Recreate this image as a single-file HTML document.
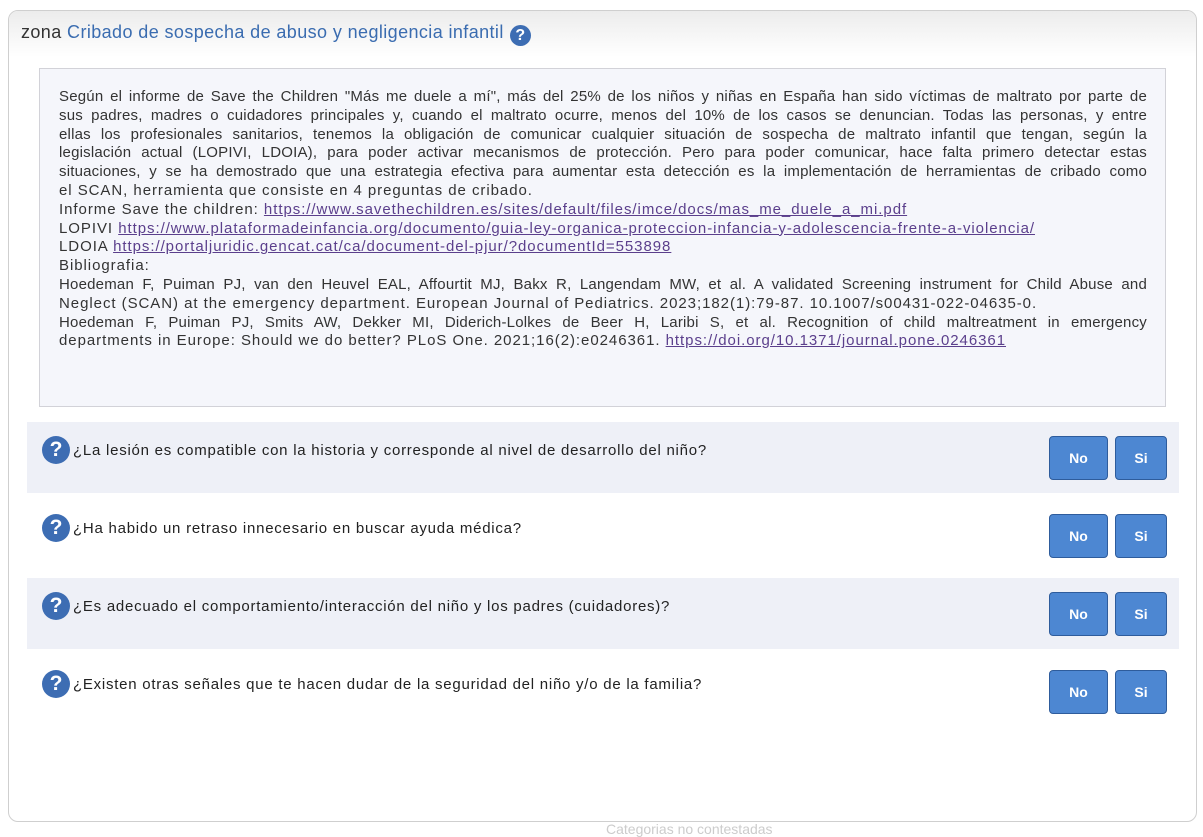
<!DOCTYPE html>
<html><head><meta charset="utf-8"><style>
*{box-sizing:border-box;margin:0;padding:0}
body{width:1203px;height:834px;background:#fff;font-family:"Liberation Sans",Arial,sans-serif;position:relative;overflow:hidden}
.modal{position:absolute;left:8px;top:10px;width:1189px;height:812px;border:1px solid #cfcfcf;border-radius:10px;background:#fff;overflow:hidden}
.hdr{height:46px;background:linear-gradient(#ececec,#fff);padding:11px 0 0 12px;font-size:18px;letter-spacing:0.4px;color:#333;white-space:nowrap}
.hdr b{font-weight:normal;color:#3a6cb0}
.qi{display:inline-block;width:21px;height:21px;border-radius:50%;background:#3d6db3;color:#fff;font-weight:bold;font-size:16px;text-align:center;line-height:21px;vertical-align:-2px;margin-left:6px;letter-spacing:0}
.box{position:absolute;left:30px;top:57px;width:1127px;height:339px;border:1px solid #d2d2d8;background:#f5f6fb;padding:19px 18px 0 19px;font-size:15px;letter-spacing:0.95px;color:#333;line-height:18.8px}
.box div{white-space:nowrap}
.box .j{text-align:justify;text-align-last:justify;white-space:normal;letter-spacing:0.2px}
a{color:#5b3f8c;text-decoration:underline}
.row{position:absolute;left:18px;width:1152px;height:71px}
.row.g{background:#eef0f7}
.q{position:absolute;left:15px;top:14px;font-size:15px;letter-spacing:0.75px;color:#222;display:flex;align-items:center;white-space:nowrap}
.ic{width:28px;height:28px;border-radius:50%;background:#3d6db3;color:#fff;font-weight:bold;font-size:21px;text-align:center;line-height:28px;margin-right:3px;letter-spacing:0}
.btn{position:absolute;top:14px;height:44px;background:#4d87d2;border:1px solid #2e5c9c;border-radius:4px;color:#fff;font-weight:bold;font-size:14px;text-align:center;line-height:42px}
.no{left:1022px;width:59px}.si{left:1088px;width:52px}
</style></head><body>
<div class="modal">
<div class="hdr">zona <b>Cribado de sospecha de abuso y negligencia infantil</b><span class="qi">?</span></div>
<div class="box">
<div class="j">Según el informe de Save the Children "Más me duele a mí", más del 25% de los niños y niñas en España han sido víctimas de maltrato por parte de</div>
<div class="j">sus padres, madres o cuidadores principales y, cuando el maltrato ocurre, menos del 10% de los casos se denuncian. Todas las personas, y entre</div>
<div class="j">ellas los profesionales sanitarios, tenemos la obligación de comunicar cualquier situación de sospecha de maltrato infantil que tengan, según la</div>
<div class="j">legislación actual (LOPIVI, LDOIA), para poder activar mecanismos de protección. Pero para poder comunicar, hace falta primero detectar estas</div>
<div class="j">situaciones, y se ha demostrado que una estrategia efectiva para aumentar esta detección es la implementación de herramientas de cribado como</div>
<div>el SCAN, herramienta que consiste en 4 preguntas de cribado.</div>
<div>Informe Save the children: <a>https://www.savethechildren.es/sites/default/files/imce/docs/mas_me_duele_a_mi.pdf</a></div>
<div>LOPIVI <a>https://www.plataformadeinfancia.org/documento/guia-ley-organica-proteccion-infancia-y-adolescencia-frente-a-violencia/</a></div>
<div>LDOIA <a>https://portaljuridic.gencat.cat/ca/document-del-pjur/?documentId=553898</a></div>
<div>Bibliografia:</div>
<div class="j">Hoedeman F, Puiman PJ, van den Heuvel EAL, Affourtit MJ, Bakx R, Langendam MW, et al. A validated Screening instrument for Child Abuse and</div>
<div>Neglect (SCAN) at the emergency department. European Journal of Pediatrics. 2023;182(1):79-87. 10.1007/s00431-022-04635-0.</div>
<div class="j">Hoedeman F, Puiman PJ, Smits AW, Dekker MI, Diderich-Lolkes de Beer H, Laribi S, et al. Recognition of child maltreatment in emergency</div>
<div>departments in Europe: Should we do better? PLoS One. 2021;16(2):e0246361. <a>https://doi.org/10.1371/journal.pone.0246361</a></div>
</div>
<div class="row g" style="top:411px"><div class="q"><span class="ic">?</span>¿La lesión es compatible con la historia y corresponde al nivel de desarrollo del niño?</div><div class="btn no">No</div><div class="btn si">Si</div></div>
<div class="row" style="top:489px"><div class="q"><span class="ic">?</span>¿Ha habido un retraso innecesario en buscar ayuda médica?</div><div class="btn no">No</div><div class="btn si">Si</div></div>
<div class="row g" style="top:567px"><div class="q"><span class="ic">?</span>¿Es adecuado el comportamiento/interacción del niño y los padres (cuidadores)?</div><div class="btn no">No</div><div class="btn si">Si</div></div>
<div class="row" style="top:645px"><div class="q"><span class="ic">?</span>¿Existen otras señales que te hacen dudar de la seguridad del niño y/o de la familia?</div><div class="btn no">No</div><div class="btn si">Si</div></div>
</div>
<div style="position:absolute;left:606px;top:821px;font-size:14px;color:#ccc">Categorias no contestadas</div>
</body></html>
